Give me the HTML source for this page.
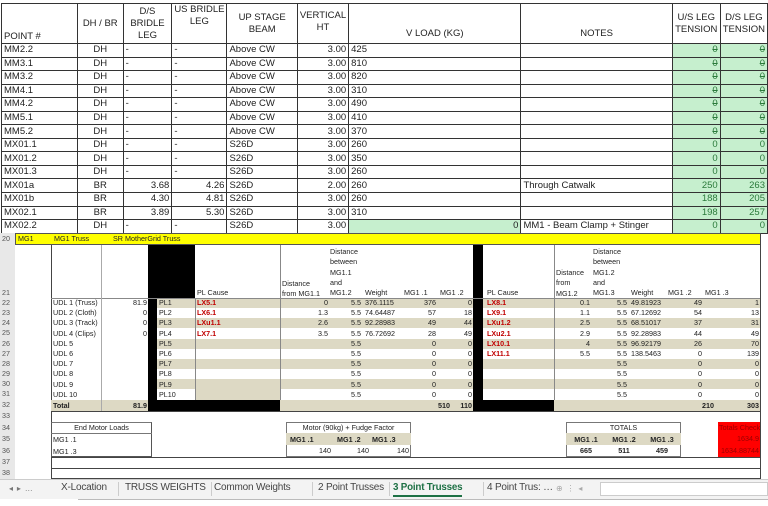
<!DOCTYPE html>
<html><head><meta charset="utf-8"><style>
*{margin:0;padding:0;box-sizing:border-box}
body{width:768px;height:506px;overflow:hidden;background:#fff;font-family:"Liberation Sans",sans-serif;position:relative;color:#222}
table.t{position:absolute;left:1px;top:3px;border-collapse:collapse;table-layout:fixed;font-size:9.5px}
table.t td{border:1px solid #333;height:13.55px;padding:0 2px;white-space:nowrap;overflow:hidden;line-height:12px}
table.t tr.h td{height:40px;text-align:center;vertical-align:middle;line-height:12px;font-size:9.5px}
.c{text-align:center}.r{text-align:right}
.g{background:#c6efce;color:#2a7a3a;text-align:right}
.s{text-decoration:line-through}
.a{position:absolute;font-size:7.2px;line-height:10px;white-space:nowrap}
.rn{position:absolute;left:0;width:15px;background:#e8e8e8;color:#555;font-size:6.5px;padding-left:2px}
.bk{position:absolute;background:#000}
.bg{position:absolute;background:#ddd9c4}
.red{color:#c00000;font-weight:bold}
.tab{position:absolute;top:482px;font-size:10px;color:#444;letter-spacing:-0.2px}
</style></head><body>
<table class="t">
<colgroup><col style="width:77px"><col style="width:46px"><col style="width:49px"><col style="width:48px"><col style="width:71px"><col style="width:46px"><col style="width:176px"><col style="width:152px"><col style="width:48px"><col style="width:47px"></colgroup>
<tr class="h"><td style="text-align:left;vertical-align:bottom">POINT #</td><td>DH / BR</td><td>D/S<br>BRIDLE<br>LEG</td><td style="vertical-align:top">US BRIDLE<br>LEG</td><td>UP STAGE<br>BEAM</td><td style="vertical-align:top;padding-top:6px">VERTICAL<br>HT</td><td style="vertical-align:bottom;padding-bottom:3px">V LOAD (KG)</td><td style="vertical-align:bottom;padding-bottom:3px">NOTES</td><td>U/S LEG<br>TENSION</td><td>D/S LEG<br>TENSION</td></tr>
<tr><td>MM2.2</td><td class="c">DH</td><td>-</td><td>-</td><td>Above CW</td><td class="r">3.00</td><td>425</td><td></td><td class="g s">0</td><td class="g s">0</td></tr>
<tr><td>MM3.1</td><td class="c">DH</td><td>-</td><td>-</td><td>Above CW</td><td class="r">3.00</td><td>810</td><td></td><td class="g s">0</td><td class="g s">0</td></tr>
<tr><td>MM3.2</td><td class="c">DH</td><td>-</td><td>-</td><td>Above CW</td><td class="r">3.00</td><td>820</td><td></td><td class="g s">0</td><td class="g s">0</td></tr>
<tr><td>MM4.1</td><td class="c">DH</td><td>-</td><td>-</td><td>Above CW</td><td class="r">3.00</td><td>310</td><td></td><td class="g s">0</td><td class="g s">0</td></tr>
<tr><td>MM4.2</td><td class="c">DH</td><td>-</td><td>-</td><td>Above CW</td><td class="r">3.00</td><td>490</td><td></td><td class="g s">0</td><td class="g s">0</td></tr>
<tr><td>MM5.1</td><td class="c">DH</td><td>-</td><td>-</td><td>Above CW</td><td class="r">3.00</td><td>410</td><td></td><td class="g s">0</td><td class="g s">0</td></tr>
<tr><td>MM5.2</td><td class="c">DH</td><td>-</td><td>-</td><td>Above CW</td><td class="r">3.00</td><td>370</td><td></td><td class="g s">0</td><td class="g s">0</td></tr>
<tr><td>MX01.1</td><td class="c">DH</td><td>-</td><td>-</td><td>S26D</td><td class="r">3.00</td><td>260</td><td></td><td class="g">0</td><td class="g">0</td></tr>
<tr><td>MX01.2</td><td class="c">DH</td><td>-</td><td>-</td><td>S26D</td><td class="r">3.00</td><td>350</td><td></td><td class="g">0</td><td class="g">0</td></tr>
<tr><td>MX01.3</td><td class="c">DH</td><td>-</td><td>-</td><td>S26D</td><td class="r">3.00</td><td>260</td><td></td><td class="g">0</td><td class="g">0</td></tr>
<tr><td>MX01a</td><td class="c">BR</td><td class="r">3.68</td><td class="r">4.26</td><td>S26D</td><td class="r">2.00</td><td>260</td><td>Through Catwalk</td><td class="g">250</td><td class="g">263</td></tr>
<tr><td>MX01b</td><td class="c">BR</td><td class="r">4.30</td><td class="r">4.81</td><td>S26D</td><td class="r">3.00</td><td>260</td><td></td><td class="g">188</td><td class="g">205</td></tr>
<tr><td>MX02.1</td><td class="c">BR</td><td class="r">3.89</td><td class="r">5.30</td><td>S26D</td><td class="r">3.00</td><td>310</td><td></td><td class="g">198</td><td class="g">257</td></tr>
<tr><td>MX02.2</td><td class="c">DH</td><td>-</td><td>-</td><td>S26D</td><td class="r">3.00</td><td class="g" style="color:#222">0</td><td>MM1 - Beam Clamp + Stinger</td><td class="g">0</td><td class="g">0</td></tr>
</table>

<div class="rn" style="top:233px;height:246px"></div>
<div class="a" style="left:2px;top:234px;color:#555">20</div>
<div class="a" style="left:2px;top:288px;color:#555">21</div>
<div class="a" style="left:2px;top:298px;color:#555">22</div>
<div class="a" style="left:2px;top:308px;color:#555">23</div>
<div class="a" style="left:2px;top:318px;color:#555">24</div>
<div class="a" style="left:2px;top:328px;color:#555">25</div>
<div class="a" style="left:2px;top:339px;color:#555">26</div>
<div class="a" style="left:2px;top:349px;color:#555">27</div>
<div class="a" style="left:2px;top:359px;color:#555">28</div>
<div class="a" style="left:2px;top:369px;color:#555">29</div>
<div class="a" style="left:2px;top:379px;color:#555">30</div>
<div class="a" style="left:2px;top:389px;color:#555">31</div>
<div class="a" style="left:2px;top:400px;color:#555">32</div>
<div class="a" style="left:2px;top:411px;color:#555">33</div>
<div class="a" style="left:2px;top:423px;color:#555">34</div>
<div class="a" style="left:2px;top:434px;color:#555">35</div>
<div class="a" style="left:2px;top:446px;color:#555">36</div>
<div class="a" style="left:2px;top:457px;color:#555">37</div>
<div class="a" style="left:2px;top:468px;color:#555">38</div>

<div style="position:absolute;left:15px;top:233px;width:746px;height:12px;background:#ffff00;border:1px solid #555"></div>
<div class="a" style="left:18px;top:234px">MG1</div>
<div class="a" style="left:54px;top:234px">MG1 Truss</div>
<div class="a" style="left:113px;top:234px">SR MotherGrid Truss</div>

<div style="position:absolute;left:51px;top:245px;width:1px;height:234px;background:#444"></div>
<div style="position:absolute;left:760px;top:233px;width:1px;height:246px;background:#444"></div>

<div class="bg" style="left:157px;top:298px;width:603px;height:10px"></div>
<div class="bg" style="left:157px;top:318px;width:603px;height:10px"></div>
<div class="bg" style="left:157px;top:339px;width:603px;height:10px"></div>
<div class="bg" style="left:157px;top:359px;width:603px;height:10px"></div>
<div class="bg" style="left:157px;top:379px;width:603px;height:10px"></div>
<div class="bg" style="left:195px;top:389px;width:85px;height:11px"></div>
<div class="bg" style="left:51px;top:400px;width:709px;height:11px"></div>

<div class="bk" style="left:148px;top:245px;width:47px;height:53px"></div>
<div class="bk" style="left:148px;top:298px;width:9px;height:102px"></div>
<div class="bk" style="left:148px;top:400px;width:132px;height:11px"></div>
<div class="bk" style="left:473px;top:245px;width:10px;height:155px"></div>
<div class="bk" style="left:473px;top:400px;width:81px;height:11px"></div>
<div style="position:absolute;left:51px;top:411px;width:709px;height:1px;background:#444"></div>
<div style="position:absolute;left:51px;top:457px;width:709px;height:1px;background:#444"></div>
<div style="position:absolute;left:51px;top:468px;width:709px;height:1px;background:#444"></div>
<div style="position:absolute;left:51px;top:478px;width:709px;height:1px;background:#444"></div>
<div style="position:absolute;left:51px;top:298px;width:709px;height:1px;background:#888"></div>
<div style="position:absolute;left:195px;top:298px;width:1px;height:102px;background:#888"></div>
<div style="position:absolute;left:280px;top:245px;width:1px;height:155px;background:#888"></div>
<div style="position:absolute;left:554px;top:245px;width:1px;height:155px;background:#888"></div>
<div style="position:absolute;left:101px;top:245px;width:1px;height:166px;background:#aaa"></div>

<div class="a" style="left:197px;top:288px">PL Cause</div>
<div class="a" style="left:282px;top:279px">Distance<br>from MG1.1</div>
<div class="a" style="left:330px;top:247px;line-height:10.3px">Distance<br>between<br>MG1.1<br>and<br>MG1.2</div>
<div class="a" style="left:365px;top:288px">Weight</div>
<div class="a" style="left:404px;top:288px">MG1 .1</div>
<div class="a" style="left:440px;top:288px">MG1 .2</div>
<div class="a" style="left:487px;top:288px">PL Cause</div>
<div class="a" style="left:556px;top:268px;line-height:10.3px">Distance<br>from<br>MG1.2</div>
<div class="a" style="left:593px;top:247px;line-height:10.3px">Distance<br>between<br>MG1.2<br>and<br>MG1.3</div>
<div class="a" style="left:631px;top:288px">Weight</div>
<div class="a" style="left:668px;top:288px">MG1 .2</div>
<div class="a" style="left:705px;top:288px">MG1 .3</div>

<div class="a" style="left:53px;top:298px;line-height:10.2px">UDL 1 (Truss)<br>UDL 2 (Cloth)<br>UDL 3 (Track)<br>UDL 4 (Clips)<br>UDL 5<br>UDL 6<br>UDL 7<br>UDL 8<br>UDL 9<br>UDL 10</div>
<div class="a" style="left:110px;width:37px;text-align:right;top:298px;line-height:10.2px">81.9<br>0<br>0<br>0</div>
<div class="a" style="left:159px;top:298px;line-height:10.2px">PL1<br>PL2<br>PL3<br>PL4<br>PL5<br>PL6<br>PL7<br>PL8<br>PL9<br>PL10</div>
<div class="a red" style="left:197px;top:298px;line-height:10.2px">LX5.1<br>LX6.1<br>LXu1.1<br>LX7.1</div>
<div class="a" style="left:290px;width:38px;text-align:right;top:298px;line-height:10.2px">0<br>1.3<br>2.6<br>3.5</div>
<div class="a" style="left:330px;width:31px;text-align:right;top:298px;line-height:10.2px">5.5<br>5.5<br>5.5<br>5.5<br>5.5<br>5.5<br>5.5<br>5.5<br>5.5<br>5.5</div>
<div class="a" style="left:365px;top:298px;line-height:10.2px">376.1115<br>74.64487<br>92.28983<br>76.72692</div>
<div class="a" style="left:402px;width:34px;text-align:right;top:298px;line-height:10.2px">376<br>57<br>49<br>28<br>0<br>0<br>0<br>0<br>0<br>0</div>
<div class="a" style="left:438px;width:34px;text-align:right;top:298px;line-height:10.2px">0<br>18<br>44<br>49<br>0<br>0<br>0<br>0<br>0<br>0</div>
<div class="a red" style="left:487px;top:298px;line-height:10.2px">LX8.1<br>LX9.1<br>LXu1.2<br>LXu2.1<br>LX10.1<br>LX11.1</div>
<div class="a" style="left:554px;width:36px;text-align:right;top:298px;line-height:10.2px">0.1<br>1.1<br>2.5<br>2.9<br>4<br>5.5</div>
<div class="a" style="left:593px;width:34px;text-align:right;top:298px;line-height:10.2px">5.5<br>5.5<br>5.5<br>5.5<br>5.5<br>5.5<br>5.5<br>5.5<br>5.5<br>5.5</div>
<div class="a" style="left:631px;top:298px;line-height:10.2px">49.81923<br>67.12692<br>68.51017<br>92.28983<br>96.92179<br>138.5463</div>
<div class="a" style="left:666px;width:36px;text-align:right;top:298px;line-height:10.2px">49<br>54<br>37<br>44<br>26<br>0<br>0<br>0<br>0<br>0</div>
<div class="a" style="left:703px;width:56px;text-align:right;top:298px;line-height:10.2px">1<br>13<br>31<br>49<br>70<br>139<br>0<br>0<br>0<br>0</div>

<div class="a" style="left:53px;top:401px;font-weight:bold">Total</div>
<div class="a" style="left:110px;width:37px;text-align:right;top:401px;font-weight:bold">81.9</div>
<div class="a" style="left:402px;width:48px;text-align:right;top:401px;font-weight:bold">510</div>
<div class="a" style="left:438px;width:34px;text-align:right;top:401px;font-weight:bold">110</div>
<div class="a" style="left:666px;width:48px;text-align:right;top:401px;font-weight:bold">210</div>
<div class="a" style="left:703px;width:56px;text-align:right;top:401px;font-weight:bold">303</div>

<div style="position:absolute;left:51px;top:422px;width:101px;height:35px;border:1px solid #555;border-top-color:#777"></div>
<div style="position:absolute;left:51px;top:433px;width:101px;height:1px;background:#777"></div>
<div class="a" style="left:51px;width:101px;text-align:center;top:423px">End Motor Loads</div>
<div class="a" style="left:53px;top:434px;line-height:11.5px">MG1 .1<br>MG1 .3</div>

<div style="position:absolute;left:286px;top:422px;width:125px;height:35px;border:1px solid #777"></div>
<div style="position:absolute;left:286px;top:433px;width:125px;height:12px;background:#ddd9c4"></div>
<div class="a" style="left:286px;width:125px;text-align:center;top:423px">Motor (90kg) + Fudge Factor</div>
<div class="a" style="left:290px;top:435px;font-weight:bold">MG1 .1</div>
<div class="a" style="left:337px;top:435px;font-weight:bold">MG1 .2</div>
<div class="a" style="left:372px;top:435px;font-weight:bold">MG1 .3</div>
<div class="a" style="left:286px;width:45px;text-align:right;top:446px">140</div>
<div class="a" style="left:333px;width:36px;text-align:right;top:446px">140</div>
<div class="a" style="left:370px;width:39px;text-align:right;top:446px">140</div>

<div style="position:absolute;left:566px;top:422px;width:115px;height:35px;border:1px solid #777"></div>
<div style="position:absolute;left:566px;top:433px;width:115px;height:12px;background:#ddd9c4"></div>
<div class="a" style="left:566px;width:115px;text-align:center;top:423px">TOTALS</div>
<div class="a" style="left:567px;width:38px;text-align:center;top:435px;font-weight:bold">MG1 .1</div>
<div class="a" style="left:605px;width:38px;text-align:center;top:435px;font-weight:bold">MG1 .2</div>
<div class="a" style="left:643px;width:38px;text-align:center;top:435px;font-weight:bold">MG1 .3</div>
<div class="a" style="left:567px;width:38px;text-align:center;top:446px;font-weight:bold">665</div>
<div class="a" style="left:605px;width:38px;text-align:center;top:446px;font-weight:bold">511</div>
<div class="a" style="left:643px;width:38px;text-align:center;top:446px;font-weight:bold">459</div>

<div style="position:absolute;left:718px;top:422px;width:42px;height:35px;background:#ff0000"></div>
<div class="a" style="left:719px;top:423px;color:#900">Totals Check</div>
<div class="a" style="left:718px;width:41px;text-align:right;top:434px;color:#900">1634.9</div>
<div class="a" style="left:718px;width:41px;text-align:right;top:446px;color:#900">1634.88744</div>

<div style="position:absolute;left:0;top:479px;width:768px;height:20px;background:#f3f3f3;border-top:1px solid #ccc"></div>
<div style="position:absolute;left:78px;top:499px;width:690px;height:1px;background:#bbb"></div>
<div class="tab" style="left:9px;font-size:8px;color:#777;top:484px">◂ &nbsp;▸ &nbsp;…</div>
<div class="tab" style="left:61px">X-Location</div>
<div class="tab" style="left:125px">TRUSS WEIGHTS</div>
<div class="tab" style="left:214px">Common Weights</div>
<div class="tab" style="left:318px">2 Point Trusses</div>
<div class="tab" style="left:393px;color:#1e7145;font-weight:bold;border-bottom:2px solid #1e7145;padding-bottom:2px;font-size:9.8px">3 Point Trusses</div>
<div class="tab" style="left:487px">4 Point Trus: …</div>
<div class="tab" style="left:556px;color:#aaa;font-size:8px;top:484px">⊕ &nbsp;⋮ &nbsp;◂</div>
<div style="position:absolute;left:118px;top:482px;width:1px;height:14px;background:#ccc"></div>
<div style="position:absolute;left:211px;top:482px;width:1px;height:14px;background:#ccc"></div>
<div style="position:absolute;left:312px;top:482px;width:1px;height:14px;background:#ccc"></div>
<div style="position:absolute;left:389px;top:482px;width:1px;height:14px;background:#ccc"></div>
<div style="position:absolute;left:483px;top:482px;width:1px;height:14px;background:#ccc"></div>
<div style="position:absolute;left:600px;top:482px;width:168px;height:14px;background:#fff;border:1px solid #ccc"></div>
</body></html>
